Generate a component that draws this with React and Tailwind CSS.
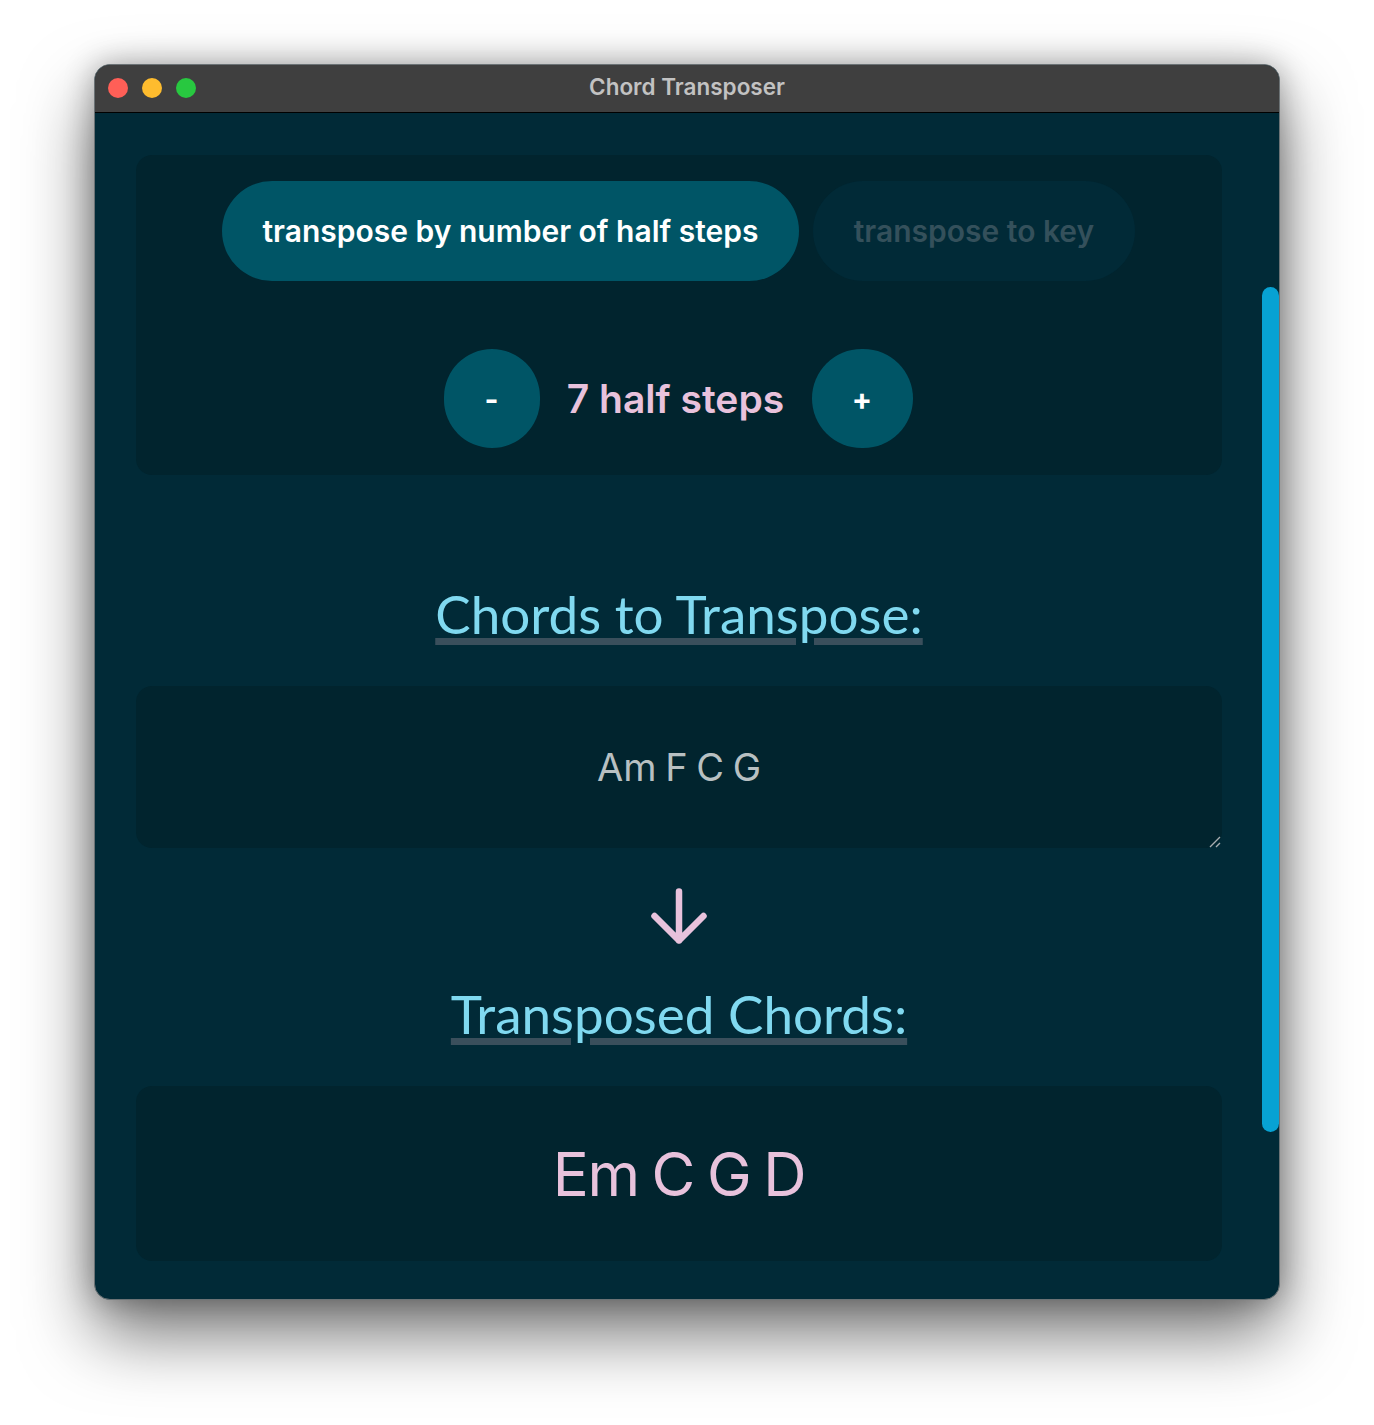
import React from "react";

const inter = "font-['Inter','Liberation_Sans',sans-serif]";

function Heading({ children, className = "" }) {
  return (
    <div className={`flex justify-center ${className}`}>
      <h2 className="font-['Lato','Noto_Sans',sans-serif] font-normal text-[53px] leading-[60px] text-[#80d9f0] underline decoration-[#3a4f5c] decoration-[7px] underline-offset-[4px]">
        {children}
      </h2>
    </div>
  );
}

export default function App() {
  return (
    <div className={`w-[1374px] h-[1425px] bg-white overflow-hidden pt-[64px] pl-[94px] ${inter}`}>
      <div className="relative w-[1186px] h-[1236px] rounded-[16px] overflow-hidden border border-[#6b7275] bg-[#012a37] shadow-[0_34px_70px_rgba(0,0,0,0.55),0_0_30px_rgba(0,0,0,0.3)] flex flex-col">
        <div className="relative h-[48px] shrink-0 bg-[#3f3f3f] border-b border-black flex items-center pl-[13px] pb-[2px] gap-[14px]">
          <span className="w-[20px] h-[20px] rounded-full bg-[#ff5f57]" />
          <span className="w-[20px] h-[20px] rounded-full bg-[#febc2e]" />
          <span className="w-[20px] h-[20px] rounded-full bg-[#28c840]" />
          <span className="absolute left-0 right-0 text-center text-[22.5px] font-semibold text-[#c2c2c2] leading-none">Chord Transposer</span>
        </div>

        <div className="flex-1 pl-[41px] pr-[57px] pt-[42px]">
          <div className="h-[320px] rounded-[16px] bg-[#01242e] pt-[26px] flex flex-col items-center">
            <div className="flex gap-[14px] ml-[-1px]">
              <div className="w-[577px] h-[100px] rounded-full bg-[#005566] flex items-center justify-center text-[30px] font-semibold text-white">transpose by number of half steps</div>
              <div className="w-[322px] h-[100px] rounded-full bg-[#012a37] flex items-center justify-center text-[30px] font-semibold text-[#34505b]">transpose to key</div>
            </div>
            <div className="flex items-center mt-[68px] ml-[-2px]">
              <div className="w-[96px] h-[99px] rounded-full bg-[#005566] flex items-center justify-center pt-[2px] text-[30px] font-bold text-white">-</div>
              <div className="w-[272px] text-center pt-[1px] text-[39px] font-semibold text-[#e8c2dc]">7 half steps</div>
              <div className="w-[101px] h-[99px] rounded-full bg-[#005566] flex items-center justify-center pt-[1px] text-[30px] font-bold text-white">+</div>
            </div>
          </div>

          <Heading className="mt-[109px]">Chords to Transpose:</Heading>

          <div className="relative mt-[42px] h-[162px] rounded-[16px] bg-[#01242e] flex items-center justify-center text-[38px] font-normal [word-spacing:-2px] text-[#b8c0c2]">
            Am F C G
            <svg className="absolute right-[1px] bottom-[0px]" width="12" height="12" viewBox="0 0 12 12" fill="none" stroke="#a8adb0" strokeWidth="1.4">
              <path d="M1 11L11 1M7 11L11 7" />
            </svg>
          </div>

          <div className="flex justify-center mt-[40px]">
            <svg width="56" height="56" viewBox="0 0 56 56" fill="none" stroke="#e8c2dc" strokeWidth="6.5" strokeLinecap="round" strokeLinejoin="round">
              <path d="M28 3.5V52.5M3.5 28L28 52.5L52.5 28" />
            </svg>
          </div>

          <Heading className="mt-[40px]">Transposed Chords:</Heading>

          <div className="mt-[42px] h-[175px] rounded-[16px] bg-[#01242e] flex items-center justify-center text-[60px] font-normal tracking-[-1.2px] [word-spacing:-3px] text-[#e8c2dc]">Em C G D</div>
        </div>

        <div className="absolute right-0 top-[222px] w-[17px] h-[845px] rounded-full bg-[#07a2d3]" />
      </div>
    </div>
  );
}
